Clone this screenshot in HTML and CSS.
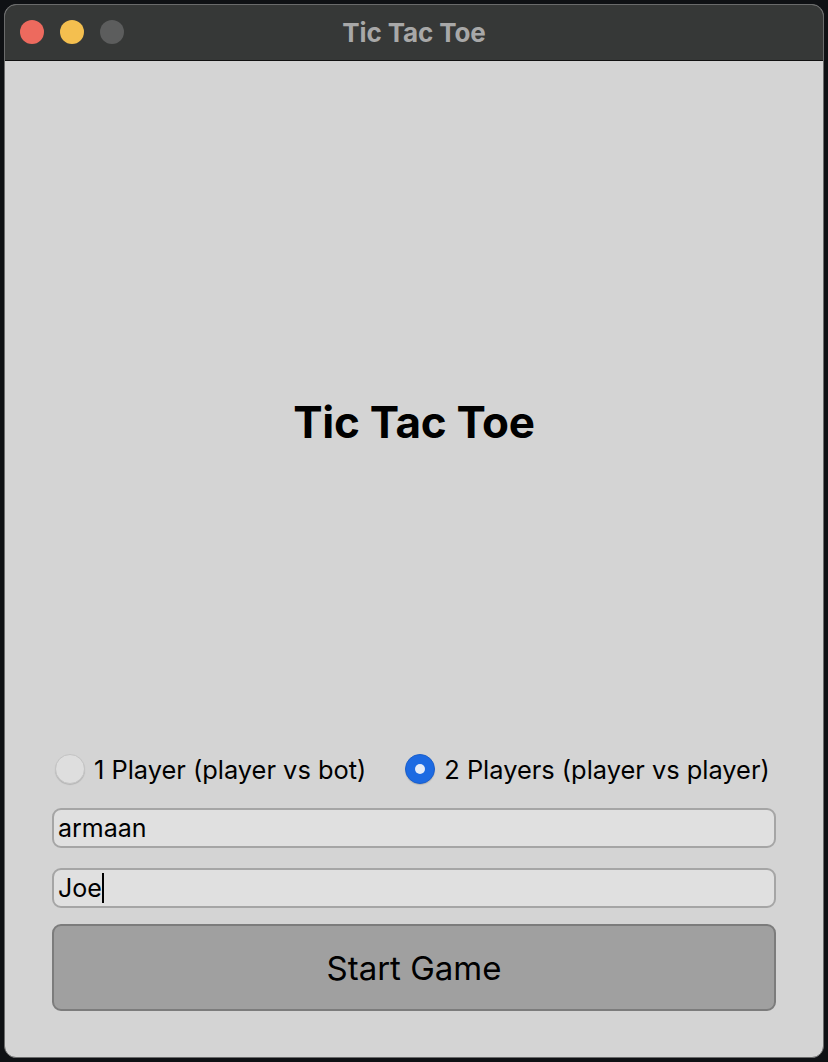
FILE: index.html
```html
<!DOCTYPE html>
<html>
<head>
<meta charset="utf-8">
<link rel="stylesheet" href="styles.css">
</head>
<body>
<div class="window">
  <div class="titlebar">
    <div class="lights">
      <span class="light red"></span>
      <span class="light yellow"></span>
      <span class="light grey"></span>
    </div>
    <div class="title">Tic Tac Toe</div>
  </div>
  <div class="content">
    <h1 class="heading">Tic Tac Toe</h1>
    <div class="radios">
      <label class="radio"><span class="dot"></span><span class="label">1 Player (player vs bot)</span></label>
      <label class="radio checked"><span class="dot"></span><span class="label">2 Players (player vs player)</span></label>
    </div>
    <div class="field">armaan</div>
    <div class="field field-second"><span class="caret">Joe</span></div>
    <div class="button">Start Game</div>
  </div>
</div>
</body>
</html>
```
FILE: styles.css
```css
html, body {
  margin: 0;
  padding: 0;
  background: #0f1114;
  width: 828px;
  height: 1062px;
  overflow: hidden;
  font-family: Inter, "Liberation Sans", sans-serif;
}
.window {
  margin: 4px;
  width: 818px;
  height: 1052px;
  border: 1px solid #6a6b6b;
  border-radius: 12px;
  overflow: hidden;
  background: #d4d4d4;
  display: flex;
  flex-direction: column;
}
.titlebar {
  height: 55px;
  background: #363837;
  border-bottom: 1px solid #111;
  position: relative;
  display: flex;
  align-items: center;
  justify-content: center;
}
.lights {
  position: absolute;
  left: 15px;
  top: 15px;
  display: flex;
  gap: 16px;
}
.light {
  width: 24px;
  height: 24px;
  border-radius: 50%;
  display: block;
}
.red { background: #ed6a5e; }
.yellow { background: #f4bf4f; }
.grey { background: #5c5d5d; }
.title {
  color: #a8a8a8;
  font-weight: 700;
  font-size: 26px;
  letter-spacing: -0.1px;
}
.content {
  flex: 1;
  display: flex;
  flex-direction: column;
  padding: 0 47px;
}
.heading {
  margin: 335px 0 0;
  height: 52px;
  line-height: 52px;
  text-align: center;
  font-size: 44px;
  font-weight: 700;
  color: #000;
  letter-spacing: -0.3px;
}
.radios {
  margin-top: 303px;
  height: 36px;
  display: flex;
  align-items: center;
  gap: 39px;
  padding-left: 3px;
}
.radio {
  display: flex;
  align-items: center;
  gap: 9px;
  font-size: 25.4px;
  color: #000;
}
.dot {
  width: 30px;
  height: 30px;
  border-radius: 50%;
  background: #dedede;
  border: 1px solid #c4c4c4;
  box-shadow: 0 1px 1px rgba(0,0,0,0.15);
  box-sizing: border-box;
  position: relative;
}
.checked .dot {
  background: #1d6ae2;
  border-color: #1a5fcc;
}
.checked .dot::after {
  content: "";
  position: absolute;
  left: 9px;
  top: 9px;
  width: 10px;
  height: 10px;
  border-radius: 50%;
  background: #e6ecf8;
}
.field {
  margin-top: 21px;
  height: 40px;
  box-sizing: border-box;
  border: 2px solid #a5a5a5;
  border-radius: 9px;
  background: #e0e0e0;
  font-size: 25px;
  line-height: 36px;
  padding-left: 4px;
  color: #000;
}
.field-second {
  margin-top: 20px;
}
.caret {
  border-right: 2px solid #000;
}
.button {
  margin-top: 16px;
  height: 87px;
  box-sizing: border-box;
  border: 2px solid #7c7c7c;
  border-radius: 9px;
  background: #a0a0a0;
  display: flex;
  align-items: center;
  justify-content: center;
  font-size: 33px;
  color: #000;
}
```
